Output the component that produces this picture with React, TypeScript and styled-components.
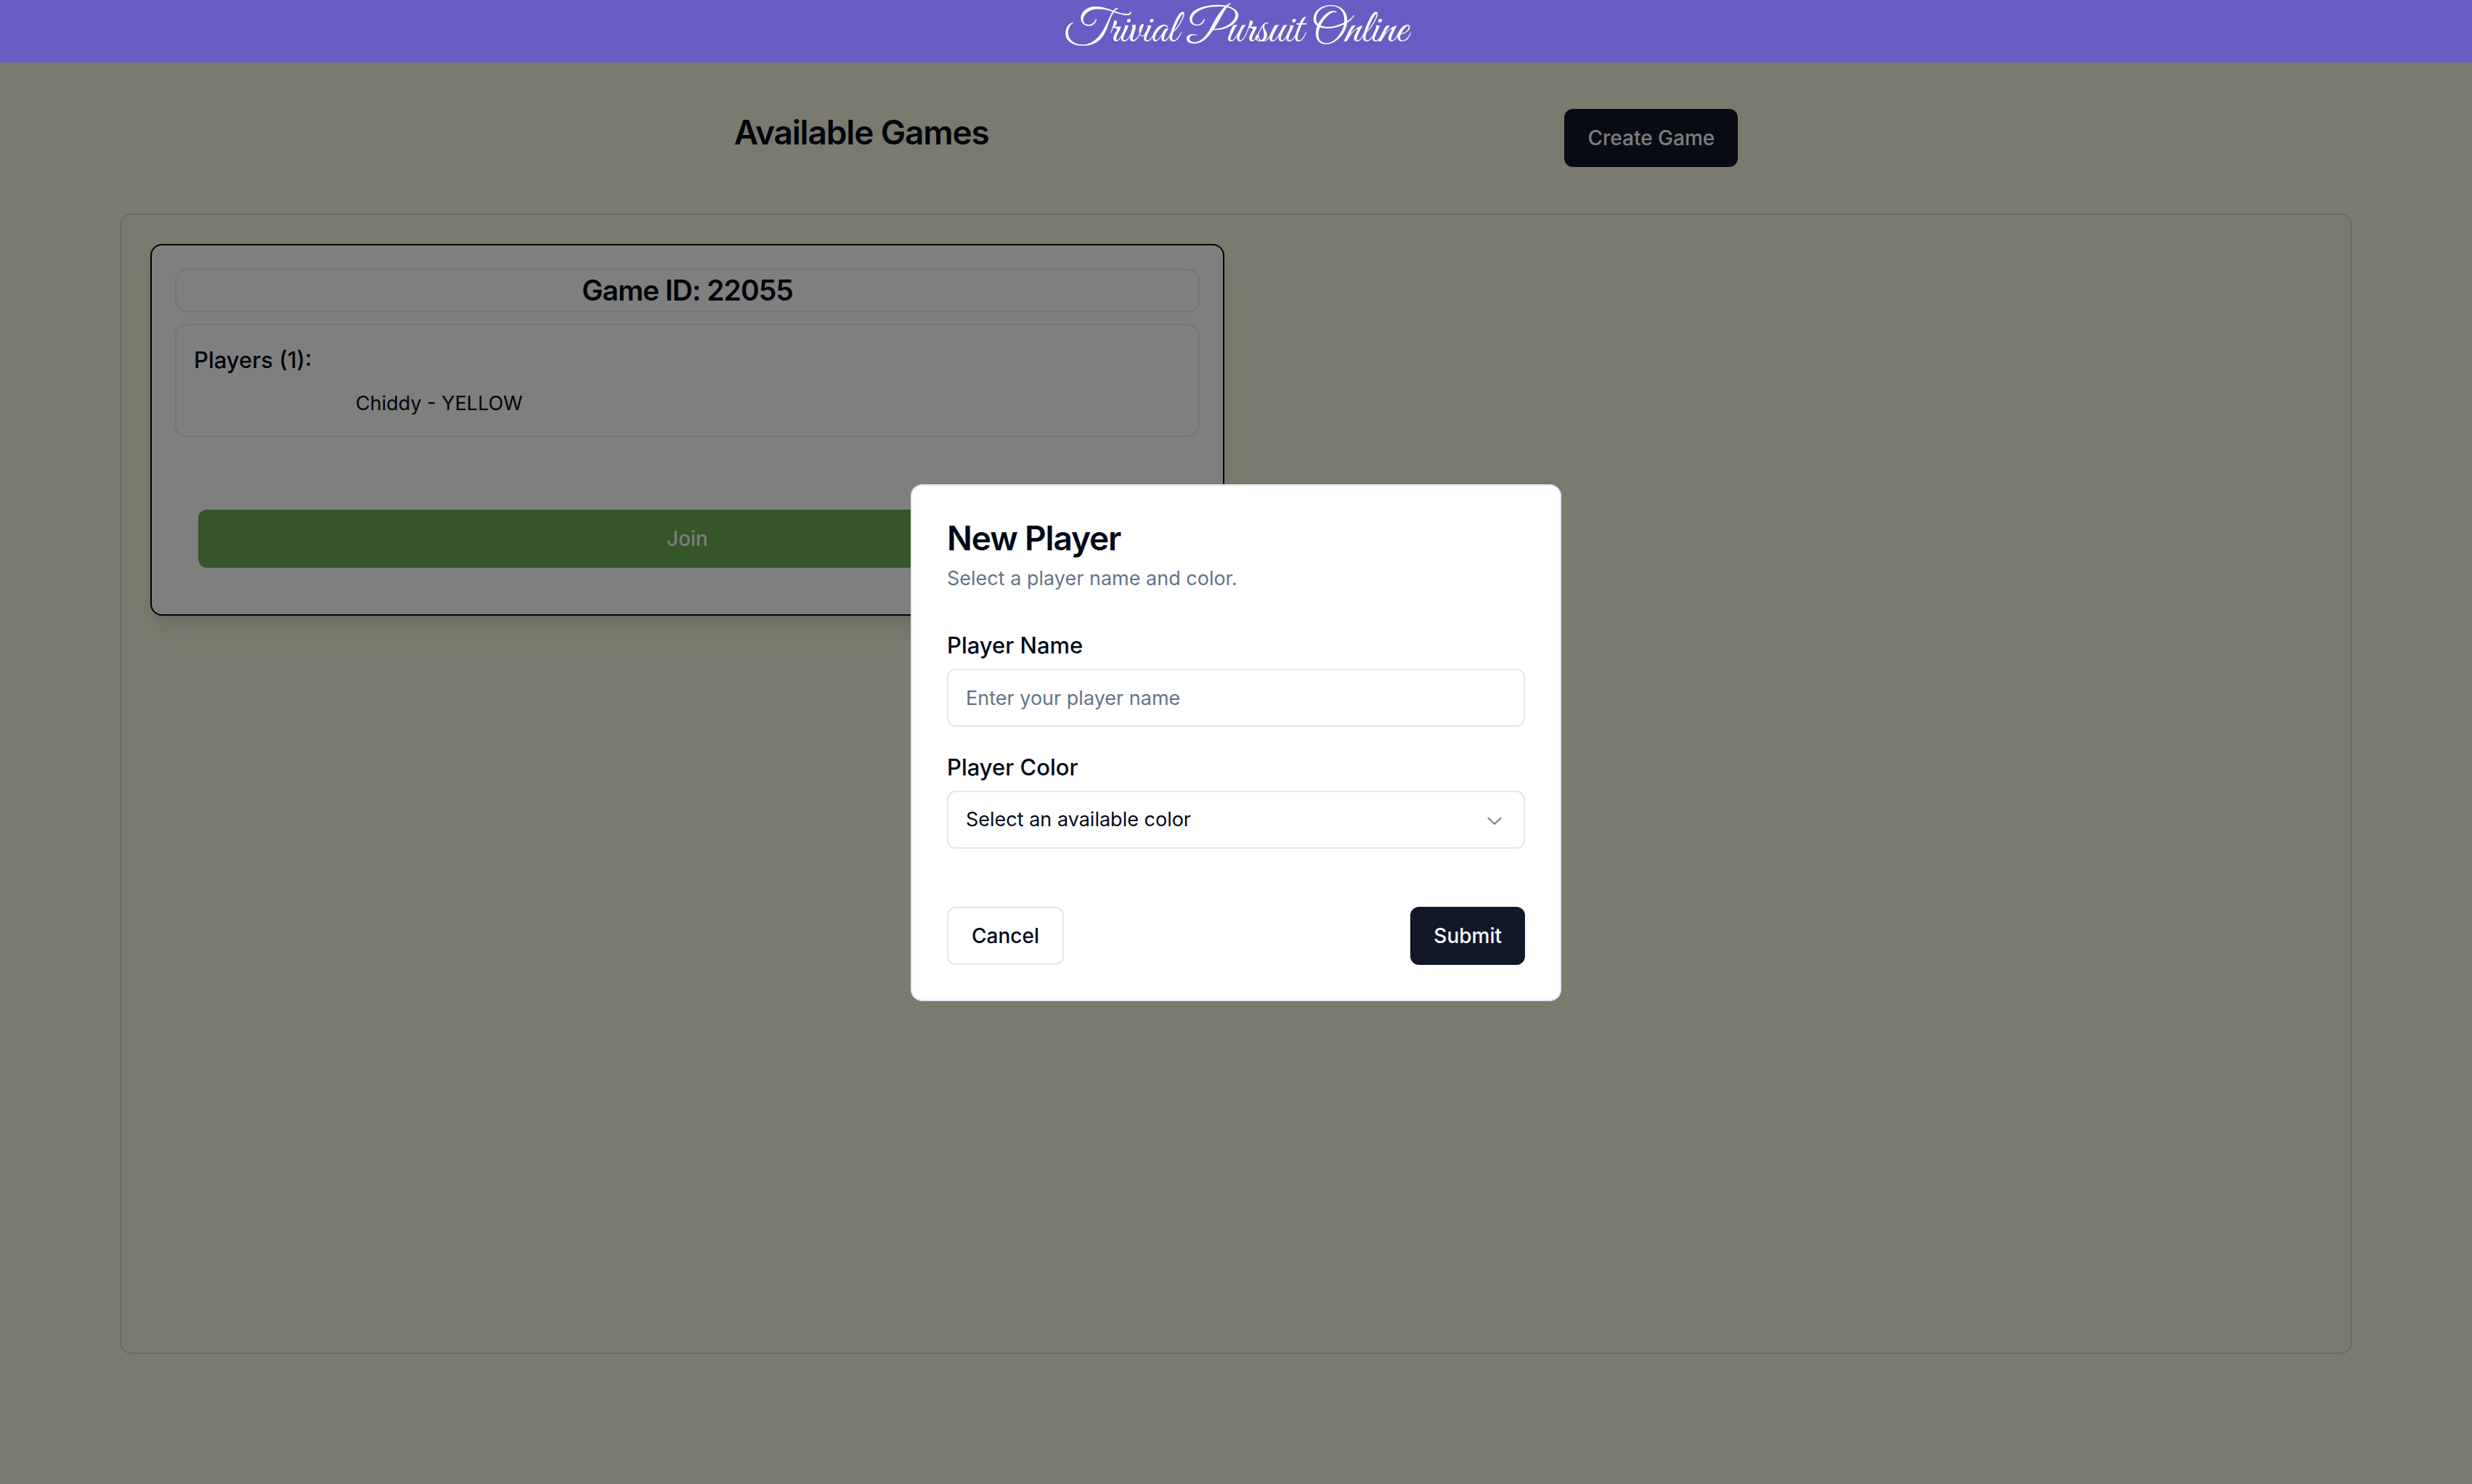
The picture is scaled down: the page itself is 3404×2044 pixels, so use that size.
import React, { useState } from "react";
import styled, { createGlobalStyle, css } from "styled-components";

const color = {
  ink: "#020817",
  navy: "#111628",
  muted: "#64748b",
  line: "#e2e8f0",
  panelLine: "#d4d4e0",
  paper: "#ffffff",
  cream: "#f5f5dc",
  brand: "#685dc5",
  join: "#6aaa55",
  pale: "#f8fafc",
};

const GlobalStyle = createGlobalStyle`
  *, *::before, *::after {
    box-sizing: border-box;
  }
  body {
    margin: 0;
    background: ${color.cream};
    color: ${color.ink};
    font-family: Inter, "Liberation Sans", sans-serif;
    font-size: 27px;
    line-height: 40px;
  }
  h1, h2, h3, h4, p, ul {
    margin: 0;
    padding: 0;
  }
  ul {
    list-style: none;
  }
  button, input, select {
    font: inherit;
    color: inherit;
  }
`;

const Page = styled.div`
  display: flex;
  flex-direction: column;
  min-height: 100vh;
`;

const Banner = styled.header`
  position: sticky;
  top: 0;
  z-index: 30;
  display: flex;
  justify-content: center;
  height: 86px;
  background: ${color.brand};
`;

const Logo = styled.h1`
  color: ${color.paper};
  font-family: "Great Vibes", "Liberation Serif", cursive;
  font-size: 65px;
  font-weight: 400;
  line-height: 86px;
`;

const Main = styled.main`
  display: flex;
  flex: 1;
  flex-direction: column;
  gap: 64px;
  padding: 64px 165px 179px;
`;

const Toolbar = styled.div`
  display: flex;
  align-items: flex-start;
  justify-content: space-evenly;
  padding: 0 53px;
`;

const heading = css`
  font-weight: 600;
  letter-spacing: -0.025em;
`;

const PageTitle = styled.h2`
  ${heading}
  font-size: 46px;
  line-height: 64px;
`;

const Button = styled.button<{ $kind: "primary" | "outline" | "join" }>`
  height: 80px;
  padding: 0 32px;
  border: 0 solid ${color.line};
  border-radius: 12px;
  font-size: 28px;
  font-weight: 500;
  cursor: pointer;
  ${({ $kind }) =>
    $kind === "primary" &&
    css`
      background: ${color.navy};
      color: ${color.pale};
    `}
  ${({ $kind }) =>
    $kind === "outline" &&
    css`
      border-width: 2px;
      background: ${color.paper};
    `}
  ${({ $kind }) =>
    $kind === "join" &&
    css`
      width: 100%;
      background: ${color.join};
      color: ${color.pale};
    `}
`;

const GamesPanel = styled.section`
  display: grid;
  flex: 1;
  grid-template-columns: 1fr 1fr;
  align-items: start;
  gap: 32px;
  padding: 40px;
  border: 2px solid ${color.panelLine};
  border-radius: 16px;
`;

const GameCard = styled.article`
  display: flex;
  flex-direction: column;
  gap: 16px;
  padding: 32px;
  border: 2px solid #000;
  border-radius: 16px;
  background: ${color.paper};
  box-shadow: 0 20px 30px -6px rgba(0, 0, 0, 0.1), 0 8px 12px -8px rgba(0, 0, 0, 0.1);
`;

const GameTitle = styled.h3`
  ${heading}
  border: 2px solid ${color.line};
  border-radius: 16px;
  font-size: 39px;
  line-height: 56px;
  text-align: center;
`;

const PlayersBox = styled.div`
  display: flex;
  flex-direction: column;
  gap: 16px;
  padding: 24px;
  border: 2px solid ${color.line};
  border-radius: 16px;
`;

const PlayersTitle = styled.h4`
  font-size: 31px;
  font-weight: 500;
  line-height: 48px;
`;

const PlayerList = styled.ul`
  display: grid;
  grid-template-columns: 1fr 1fr;
  gap: 8px;
  text-align: center;
`;

const CardFooter = styled.div`
  margin-top: 52px;
  padding: 32px;
`;

const Overlay = styled.div`
  position: fixed;
  inset: 0;
  z-index: 20;
  display: flex;
  align-items: center;
  justify-content: center;
  padding-top: 2px;
  background: rgba(0, 0, 0, 0.5);
`;

const Dialog = styled.form`
  display: flex;
  flex-direction: column;
  gap: 48px;
  width: 100%;
  max-width: 896px;
  padding: 48px;
  border: 2px solid ${color.line};
  border-radius: 16px;
  background: ${color.paper};
`;

const DialogHeader = styled.div`
  display: flex;
  flex-direction: column;
  gap: 12px;
`;

const DialogTitle = styled.h2`
  ${heading}
  font-size: 46px;
  line-height: 48px;
`;

const Hint = styled.p`
  color: ${color.muted};
`;

const Fields = styled.div`
  display: flex;
  flex-direction: column;
  gap: 32px;
`;

const Field = styled.div`
  display: flex;
  flex-direction: column;
  gap: 8px;
`;

const Label = styled.label`
  font-size: 31px;
  font-weight: 500;
  line-height: 48px;
`;

const control = css`
  width: 100%;
  height: 80px;
  padding: 0 24px;
  border: 2px solid ${color.line};
  border-radius: 12px;
  outline: none;
  background: ${color.paper};
`;

const TextInput = styled.input`
  ${control}
  &::placeholder {
    color: ${color.muted};
    opacity: 1;
  }
`;

const SelectWrap = styled.div`
  position: relative;
`;

const Select = styled.select`
  ${control}
  appearance: none;
`;

const Chevron = styled.svg`
  position: absolute;
  top: 24px;
  right: 26px;
  width: 32px;
  height: 32px;
  opacity: 0.5;
  pointer-events: none;
`;

const DialogFooter = styled.div`
  display: flex;
  justify-content: space-between;
  padding-top: 32px;
`;

const games = [{ id: 22055, players: [{ name: "Chiddy", color: "YELLOW" }] }];
const availableColors = ["Blue", "Green", "Orange", "Pink", "Purple"];

function NewPlayerDialog() {
  const [name, setName] = useState("");
  const [choice, setChoice] = useState("");

  return (
    <Overlay>
      <Dialog
        role="dialog"
        aria-modal="true"
        aria-labelledby="dialog-title"
        onSubmit={(event) => event.preventDefault()}
      >
        <DialogHeader>
          <DialogTitle id="dialog-title">New Player</DialogTitle>
          <Hint>Select a player name and color.</Hint>
        </DialogHeader>
        <Fields>
          <Field>
            <Label htmlFor="player-name">Player Name</Label>
            <TextInput
              id="player-name"
              placeholder="Enter your player name"
              value={name}
              onChange={(event) => setName(event.target.value)}
            />
          </Field>
          <Field>
            <Label htmlFor="player-color">Player Color</Label>
            <SelectWrap>
              <Select
                id="player-color"
                value={choice}
                onChange={(event) => setChoice(event.target.value)}
              >
                <option value="">Select an available color</option>
                {availableColors.map((item) => (
                  <option key={item} value={item}>
                    {item}
                  </option>
                ))}
              </Select>
              <Chevron viewBox="0 0 15 15" fill="currentColor" aria-hidden="true">
                <path
                  fillRule="evenodd"
                  clipRule="evenodd"
                  d="M3.13523 6.15803C3.3241 5.95657 3.64052 5.94637 3.84197 6.13523L7.5 9.56464L11.158 6.13523C11.3595 5.94637 11.6759 5.95657 11.8648 6.15803C12.0536 6.35949 12.0434 6.67591 11.842 6.86477L7.84197 10.6148C7.64964 10.7951 7.35036 10.7951 7.15803 10.6148L3.15803 6.86477C2.95657 6.67591 2.94637 6.35949 3.13523 6.15803Z"
                />
              </Chevron>
            </SelectWrap>
          </Field>
        </Fields>
        <DialogFooter>
          <Button type="button" $kind="outline">
            Cancel
          </Button>
          <Button type="submit" $kind="primary">
            Submit
          </Button>
        </DialogFooter>
      </Dialog>
    </Overlay>
  );
}

export default function App() {
  return (
    <>
      <GlobalStyle />
      <Page>
        <Banner>
          <Logo>Trivial Pursuit Online</Logo>
        </Banner>
        <Main>
          <Toolbar>
            <PageTitle>Available Games</PageTitle>
            <Button type="button" $kind="primary">
              Create Game
            </Button>
          </Toolbar>
          <GamesPanel>
            {games.map((game) => (
              <GameCard key={game.id}>
                <GameTitle>{`Game ID: ${game.id}`}</GameTitle>
                <PlayersBox>
                  <PlayersTitle>{`Players (${game.players.length}):`}</PlayersTitle>
                  <PlayerList>
                    {game.players.map((player) => (
                      <li key={player.name}>{`${player.name} - ${player.color}`}</li>
                    ))}
                  </PlayerList>
                </PlayersBox>
                <CardFooter>
                  <Button type="button" $kind="join">
                    Join
                  </Button>
                </CardFooter>
              </GameCard>
            ))}
          </GamesPanel>
        </Main>
      </Page>
      <NewPlayerDialog />
    </>
  );
}
